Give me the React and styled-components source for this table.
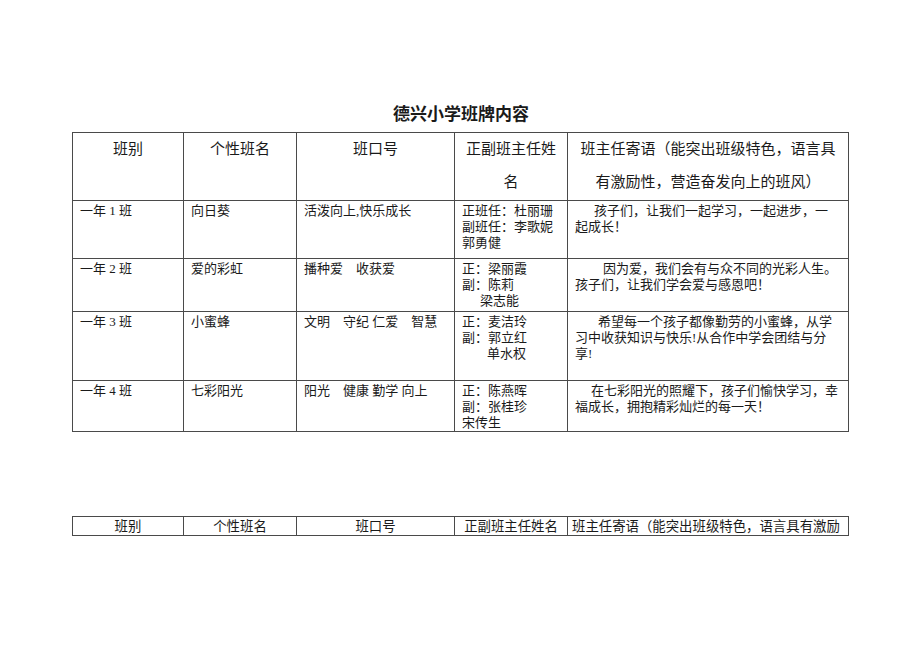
import React from 'react';
import styled, { createGlobalStyle } from 'styled-components';

const GlobalStyle = createGlobalStyle`
  html, body {
    margin: 0;
    padding: 0;
    background: #ffffff;
  }
  body {
    font-family: "Liberation Serif", "Noto Sans CJK SC", serif;
    color: #1a1a1a;
  }
`;

const Page = styled.div`
  width: 920px;
  height: 651px;
  box-sizing: border-box;
  padding: 104px 72px 0 72px;
`;

const Title = styled.h1`
  margin: 0 0 6px 0;
  font-size: 17px;
  line-height: 22px;
  font-weight: bold;
  text-align: center;
  padding-left: 2px;
`;

const Table = styled.table`
  width: 776px;
  table-layout: fixed;
  border-collapse: collapse;
  margin-top: ${props => props.gap || 0}px;
`;

const Col = styled.col`
  width: ${props => props.w}px;
`;

const Row = styled.tr`
  height: ${props => props.h}px;
`;

const HeadCell = styled.th`
  border: 1px solid #4a4a4a;
  padding: 0 6px;
  font-size: 15px;
  line-height: 33px;
  font-weight: normal;
  text-align: center;
  vertical-align: top;
`;

const Cell = styled.td`
  border: 1px solid #4a4a4a;
  padding: 2px 6px 0 7px;
  font-size: 13px;
  line-height: 16px;
  text-align: left;
  vertical-align: top;
  white-space: pre-wrap;
  text-indent: ${props => props.indent || 0}px;
`;

const Indent = styled.span`
  padding-left: ${props => props.w}px;
`;

const SmallCell = styled.td`
  border: 1px solid #4a4a4a;
  padding: 0 4px;
  font-size: 13.4px;
  line-height: 17px;
  text-align: ${props => (props.left ? 'left' : 'center')};
  white-space: nowrap;
  overflow: hidden;
  vertical-align: middle;
`;

const widths = [111, 113, 158, 113, 281];

const rows = [
  {
    h: 58,
    cls: '一年 1 班',
    name: '向日葵',
    motto: '活泼向上,快乐成长',
    teachers: [['正班任：杜丽珊', 0], ['副班任：李歌妮', 0], ['郭勇健', 0]],
    indent: 19,
    words: ['孩子们，让我们一起学习，一起进步，一', '起成长！'],
  },
  {
    h: 53,
    cls: '一年 2 班',
    name: '爱的彩虹',
    motto: '播种爱　收获爱',
    teachers: [['正：梁丽霞', 0], ['副：陈莉', 0], ['梁志能', 18]],
    indent: 28,
    words: ['因为爱，我们会有与众不同的光彩人生。', '孩子们，让我们学会爱与感恩吧！'],
  },
  {
    h: 69,
    cls: '一年 3 班',
    name: '小蜜蜂',
    motto: '文明　守纪 仁爱　智慧',
    teachers: [['正：麦洁玲', 0], ['副：郭立红', 0], ['单水权', 25]],
    indent: 23,
    words: ['希望每一个孩子都像勤劳的小蜜蜂，从学', '习中收获知识与快乐!从合作中学会团结与分', '享!'],
  },
  {
    h: 51,
    cls: '一年 4 班',
    name: '七彩阳光',
    motto: '阳光　健康 勤学 向上',
    teachers: [['正：陈燕晖', 0], ['副：张桂珍', 0], ['宋传生', 0]],
    indent: 16,
    words: ['在七彩阳光的照耀下，孩子们愉快学习，幸', '福成长，拥抱精彩灿烂的每一天！'],
  },
];

const Columns = () => (
  <colgroup>
    {widths.map((w, i) => (
      <Col key={i} w={w} />
    ))}
  </colgroup>
);

const App = () => {
  return (
    <Page>
      <GlobalStyle />
      <Title>德兴小学班牌内容</Title>
      <Table>
        <Columns />
        <tbody>
          <Row h={68}>
            <HeadCell>班别</HeadCell>
            <HeadCell>个性班名</HeadCell>
            <HeadCell>班口号</HeadCell>
            <HeadCell>正副班主任姓<br />名</HeadCell>
            <HeadCell>班主任寄语（能突出班级特色，语言具<br />有激励性，营造奋发向上的班风）</HeadCell>
          </Row>
          {rows.map((r, i) => (
            <Row h={r.h} key={i}>
              <Cell>{r.cls}</Cell>
              <Cell>{r.name}</Cell>
              <Cell>{r.motto}</Cell>
              <Cell>
                {r.teachers.map(([t, pad], j) => (
                  <div key={j}>
                    <Indent w={pad}>{t}</Indent>
                  </div>
                ))}
              </Cell>
              <Cell indent={r.indent}>
                {r.words.map((w, j) => (
                  <React.Fragment key={j}>
                    {j > 0 && <br />}
                    {w}
                  </React.Fragment>
                ))}
              </Cell>
            </Row>
          ))}
        </tbody>
      </Table>
      <Table gap={84}>
        <Columns />
        <tbody>
          <Row h={19}>
            <SmallCell>班别</SmallCell>
            <SmallCell>个性班名</SmallCell>
            <SmallCell>班口号</SmallCell>
            <SmallCell>正副班主任姓名</SmallCell>
            <SmallCell left>班主任寄语（能突出班级特色，语言具有激励</SmallCell>
          </Row>
        </tbody>
      </Table>
    </Page>
  );
};

export default App;
